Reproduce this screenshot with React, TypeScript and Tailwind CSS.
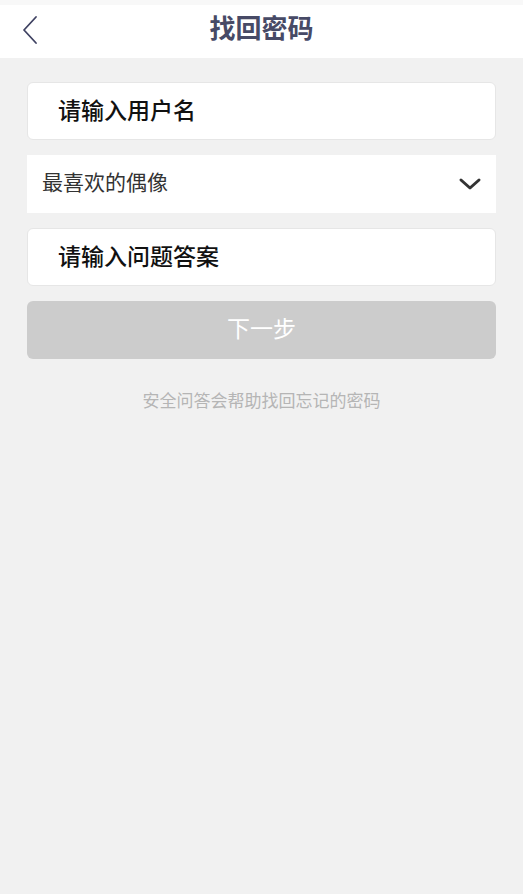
import { useState } from "react";

const FONT = "font-['Roboto','Noto_Sans_CJK_SC',sans-serif]";

const App = () => {
  const [username, setUsername] = useState("");
  const [answer, setAnswer] = useState("");

  return (
    <div className={`min-h-[894px] w-full bg-[#f1f1f1] ${FONT}`}>
      {/* Header */}
      <div className="pt-[5px] bg-[#f8f8f8]">
        <div className="relative flex h-[53px] items-center justify-center bg-white pb-[6px]">
          <button className="absolute left-[17px] top-[6px] p-1">
            <svg width="18" height="30" viewBox="0 0 18 30" fill="none">
              <path d="M15 2 L3 15 L15 28" stroke="#3f4262" strokeWidth="1.8" strokeLinecap="round" strokeLinejoin="round" />
            </svg>
          </button>
          <h1 className="text-[26px] font-bold text-[#474a66] leading-none">找回密码</h1>
        </div>
      </div>

      {/* Form */}
      <div className="flex flex-col gap-[15px] px-[27px] pt-[24px]">
        <input
          value={username}
          onChange={(e) => setUsername(e.target.value)}
          placeholder="请输入用户名"
          className="h-[58px] w-full rounded-md border border-[#e6e6e6] bg-white px-[30px] text-[23px] font-medium text-black placeholder:text-[#111] outline-none"
        />

        <div className="flex h-[58px] items-center justify-between bg-white pl-[15px] pr-[14px]">
          <span className="text-[21px] text-[#333]">最喜欢的偶像</span>
          <svg width="24" height="16" viewBox="0 0 24 16" fill="none">
            <path d="M3 4 L12 12 L21 4" stroke="#333" strokeWidth="3" strokeLinecap="round" strokeLinejoin="round" />
          </svg>
        </div>

        <input
          value={answer}
          onChange={(e) => setAnswer(e.target.value)}
          placeholder="请输入问题答案"
          className="h-[58px] w-full rounded-md border border-[#e6e6e6] bg-white px-[30px] text-[23px] font-medium text-black placeholder:text-[#111] outline-none"
        />

        <button className="h-[58px] w-full rounded-md bg-[#cccccc] text-[23px] text-white">下一步</button>

        <p className="mt-[15px] text-center text-[17px] leading-[25px] text-[#b5b5b5]">安全问答会帮助找回忘记的密码</p>
      </div>
    </div>
  );
};

export default App;
